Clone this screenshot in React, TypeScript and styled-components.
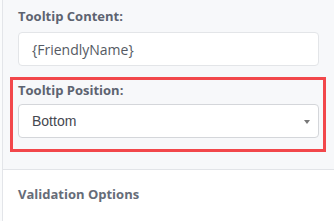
import styled, { createGlobalStyle } from "styled-components";

const GlobalStyle = createGlobalStyle`
	html, body {
		margin: 0;
		padding: 0;
		background: #f7f8fa;
	}
	body {
		font-family: "Open Sans", "Liberation Sans", sans-serif;
	}
`;

const Page = styled.div`
	padding-left: 2px;
	height: 221px;
	box-sizing: border-box;
	background: #fafbfc;
`;

const Panel = styled.div`
	height: 100%;
	border-left: 1px solid #e3e5e9;
	display: flex;
	flex-direction: column;
`;

const Settings = styled.div`
	background: #f7f8fa;
	padding: 7px 15px 17px 15px;
	border-bottom: 1px solid #e2e4e8;
	display: flex;
	flex-direction: column;
`;

const Field = styled.div<{ $gap: number }>`
	display: flex;
	flex-direction: column;
	gap: ${(p) => p.$gap}px;
`;

const Label = styled.label`
	font-size: 13px;
	line-height: 18px;
	font-weight: 700;
	color: #5d6370;
`;

const TextInput = styled.div`
	height: 34px;
	box-sizing: border-box;
	border: 1px solid #e3e5e8;
	border-radius: 4px;
	background: #fff;
	padding: 0 13px;
	display: flex;
	align-items: center;
	font-size: 14px;
	color: #555a63;
`;

const Highlight = styled.div`
	margin: 11px -7px 0 -8px;
	border: 3px solid #f2474b;
	padding: 1px 4px 11px 5px;
`;

const Select = styled.div`
	height: 34px;
	box-sizing: border-box;
	border: 1px solid #d4d6da;
	border-radius: 4px;
	background: #fff;
	padding: 0 8px 0 13px;
	display: flex;
	align-items: center;
	justify-content: space-between;
	font-family: "Liberation Sans", Arial, sans-serif;
	font-size: 14px;
	color: #454850;
`;

const Caret = styled.span`
	width: 0;
	height: 0;
	border-left: 3px solid transparent;
	border-right: 3px solid transparent;
	border-top: 4px solid #777;
	margin-top: 2px;
`;

const Section = styled.div`
	flex: 1;
	background: #fff;
	padding: 15px 15px;
`;

const SectionTitle = styled.div`
	font-size: 13px;
	line-height: 18px;
	font-weight: 700;
	color: #666c78;
`;

export default function App() {
	return (
		<>
			<GlobalStyle />
			<Page>
				<Panel>
					<Settings>
						<Field $gap={7}>
							<Label>Tooltip Content:</Label>
							<TextInput>{"{FriendlyName}"}</TextInput>
						</Field>
						<Highlight>
							<Field $gap={5}>
								<Label>Tooltip Position:</Label>
								<Select>
									<span>Bottom</span>
									<Caret />
								</Select>
							</Field>
						</Highlight>
					</Settings>
					<Section>
						<SectionTitle>Validation Options</SectionTitle>
					</Section>
				</Panel>
			</Page>
		</>
	);
}
